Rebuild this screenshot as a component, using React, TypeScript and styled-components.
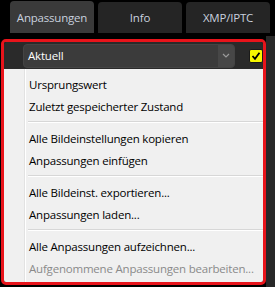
import styled, { createGlobalStyle } from "styled-components";

const GlobalStyle = createGlobalStyle`
  html, body {
    margin: 0;
    padding: 0;
    background: #000;
  }
  body {
    font-family: "Open Sans", "Noto Sans", sans-serif;
    width: 275px;
    height: 287px;
    overflow: hidden;
  }
`;

const Screen = styled.div`
  display: flex;
  flex-direction: column;
  width: 275px;
  height: 287px;
  background: #000;
`;

const TabBar = styled.div`
  display: flex;
  gap: 4px;
  padding: 1px 0 0 10px;
  height: 32px;
`;

const Tab = styled.div<{ $active?: boolean }>`
  width: 84px;
  display: flex;
  align-items: center;
  justify-content: center;
  margin-top: ${(p) => (p.$active ? "0" : "1px")};
  border-radius: 4px 4px 0 0;
  background: ${(p) => (p.$active ? "#3a3a3a" : "#252525")};
  color: #c9d1df;
  font-size: 11.5px;
  letter-spacing: -0.2px;
`;

const Body = styled.div`
  display: flex;
  margin-top: 6px;
  flex: 1;
`;

const Panel = styled.div`
  width: 259px;
  margin-left: 1px;
  border: 3px solid #e8141b;
  border-radius: 5px;
  height: 240px;
  display: flex;
  flex-direction: column;
  overflow: hidden;
`;

const RightFill = styled.div`
  flex: 1;
  margin-top: -3px;
  background: #282828;
`;

const Header = styled.div`
  height: 27px;
  background: #2a2a2a;
  display: flex;
  align-items: center;
  padding-left: 19px;
  gap: 14px;
`;

const Select = styled.div`
  width: 210px;
  height: 22px;
  display: flex;
  border: 1px solid #444;
  border-radius: 4px;
  background: #3b3b3b;
  overflow: hidden;
`;

const SelectValue = styled.div`
  flex: 1;
  display: flex;
  align-items: center;
  padding-left: 4px;
  color: #fff;
  font-size: 11.5px;
  letter-spacing: -0.2px;
`;

const SelectArrow = styled.div`
  width: 16px;
  display: flex;
  align-items: center;
  justify-content: center;
  background: #474747;
`;

const Check = styled.div`
  width: 12px;
  height: 12px;
  border: 1px solid #1a1a1a;
  border-radius: 2px;
  background: #f7f700;
  display: flex;
  align-items: center;
  justify-content: center;
`;

const Menu = styled.div`
  flex: 1;
  position: relative;
  background: #f0f0f0;
  padding: 4px 0 3px;
  display: flex;
  flex-direction: column;
`;

const Gutter = styled.div`
  position: absolute;
  left: 20px;
  top: 0;
  bottom: 0;
  width: 1px;
  background: #e2e2e2;
  border-right: 1px solid #fff;
`;

const Item = styled.div<{ $disabled?: boolean }>`
  height: 22px;
  display: flex;
  align-items: center;
  padding-left: 25px;
  font-size: 11.5px;
  letter-spacing: -0.2px;
  color: ${(p) => (p.$disabled ? "#8a8a8a" : "#000")};
  white-space: nowrap;
`;

const Separator = styled.div`
  height: 10px;
  display: flex;
  align-items: center;
  padding-left: 24px;
  &::after {
    content: "";
    flex: 1;
    height: 1px;
    background: #d7d7d7;
    border-bottom: 1px solid #fff;
  }
`;

const groups: { label: string; disabled?: boolean }[][] = [
  [{ label: "Ursprungswert" }, { label: "Zuletzt gespeicherter Zustand" }],
  [{ label: "Alle Bildeinstellungen kopieren" }, { label: "Anpassungen einfügen" }],
  [{ label: "Alle Bildeinst. exportieren..." }, { label: "Anpassungen laden..." }],
  [
    { label: "Alle Anpassungen aufzeichnen..." },
    { label: "Aufgenommene Anpassungen bearbeiten...", disabled: true },
  ],
];

const App = () => {
  return (
    <Screen>
      <GlobalStyle />
      <TabBar>
        <Tab $active>Anpassungen</Tab>
        <Tab>Info</Tab>
        <Tab>XMP/IPTC</Tab>
      </TabBar>
      <Body>
        <Panel>
          <Header>
            <Select>
              <SelectValue>Aktuell</SelectValue>
              <SelectArrow>
                <svg width="8" height="5" viewBox="0 0 8 5">
                  <path d="M1 1 L4 4 L7 1" stroke="#9a9a9a" strokeWidth="1.2" fill="none" />
                </svg>
              </SelectArrow>
            </Select>
            <Check>
              <svg width="10" height="10" viewBox="0 0 10 10">
                <path d="M1.5 5 L4 7.8 L8.5 1.8" stroke="#000" strokeWidth="1.8" fill="none" />
              </svg>
            </Check>
          </Header>
          <Menu>
            <Gutter />
            {groups.map((group, gi) => (
              <div key={gi}>
                {gi > 0 && <Separator />}
                {group.map((item) => (
                  <Item key={item.label} $disabled={item.disabled}>
                    {item.label}
                  </Item>
                ))}
              </div>
            ))}
          </Menu>
        </Panel>
        <RightFill />
      </Body>
    </Screen>
  );
};

export default App;
